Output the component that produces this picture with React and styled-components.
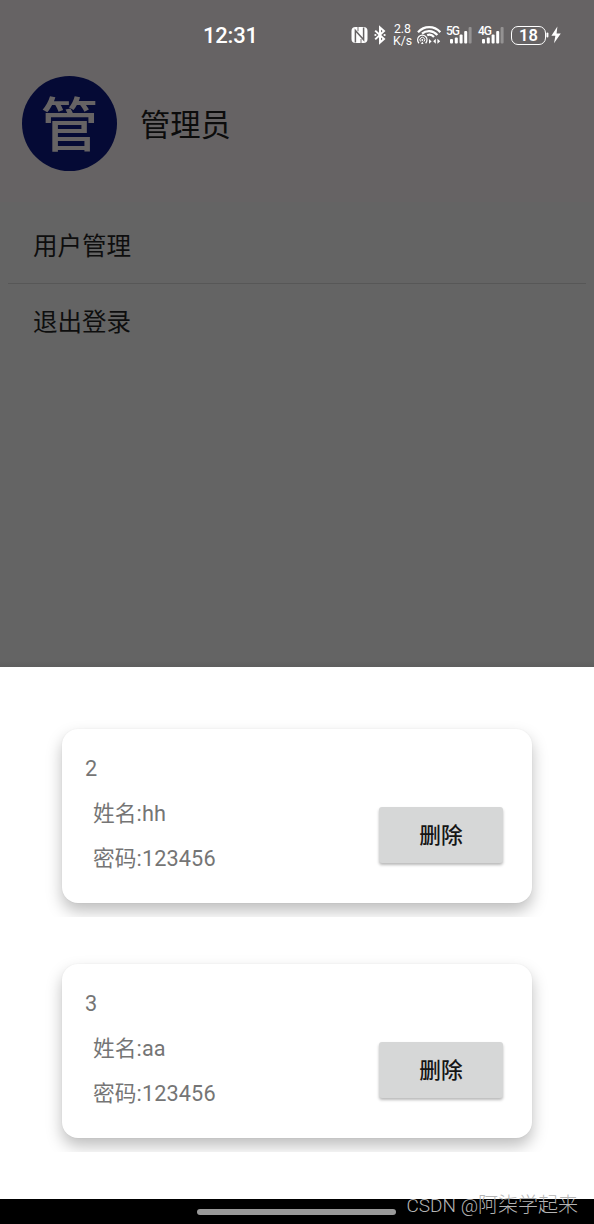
import styled, { createGlobalStyle } from "styled-components"

const usuarios = [
    { id: 2, nome: "hh", senha: "123456" },
    { id: 3, nome: "aa", senha: "123456" },
]

export default function App() {
    return (
        <>
            <GlobalStyle />
            <Tela>
                <Topo>
                    <StatusBar>
                        <Hora>12:31</Hora>
                        <StatusIcons />
                    </StatusBar>
                    <Perfil>
                        <Avatar>管</Avatar>
                        <Nome>管理员</Nome>
                    </Perfil>
                </Topo>
                <Menu>
                    <MenuItem>用户管理</MenuItem>
                    <MenuItem $linha>退出登录</MenuItem>
                </Menu>
                <Painel>
                    {usuarios.map(u => (
                        <Item key={u.id}>
                            <Card>
                                <Dados>
                                    <Numero>{u.id}</Numero>
                                    <Campo>姓名:{u.nome}</Campo>
                                    <Campo>密码:{u.senha}</Campo>
                                </Dados>
                                <Excluir>删除</Excluir>
                            </Card>
                        </Item>
                    ))}
                </Painel>
                <NavBar>
                    <Gesto />
                </NavBar>
                <Marca><MarcaSite>CSDN @</MarcaSite>阿柒学起来</Marca>
            </Tela>
        </>
    )
}

function Sinal({ tipo }) {
    return (
        <Rede>
            <RedeTipo>{tipo}</RedeTipo>
            <svg width="26" height="22" viewBox="0 0 26 22" fill="#fff">
                <rect x="4" y="15" width="3" height="4.5" rx="1" />
                <rect x="8.8" y="13.4" width="3" height="6.1" rx="1" />
                <rect x="13.6" y="10.5" width="3" height="9" rx="1" />
                <rect x="18.2" y="7" width="3" height="12.5" rx="1" />
                <rect x="22.6" y="3" width="3" height="16.5" rx="1" opacity="0.3" />
            </svg>
        </Rede>
    )
}

function StatusIcons() {
    return (
        <Icones>
            <svg width="17" height="18" viewBox="0 0 17 18">
                <rect x="0.5" y="1" width="16" height="16" rx="4" fill="#fff" />
                <path d="M4.4 16.5V4.4l8.2 9.4V1.5" fill="none" stroke="#666364" strokeWidth="1.5" />
                <path d="M7 5.2V1M10 13v4" fill="none" stroke="#666364" strokeWidth="0.9" />
            </svg>
            <Bluetooth width="12" height="20" viewBox="0 0 12 20">
                <path d="M1.2 5.6 10 14 6 17.6V2.4L10 6 1.2 14.4" fill="none" stroke="#fff" strokeWidth="2" />
                <circle cx="1.4" cy="10" r="1.1" fill="#fff" />
                <circle cx="10.6" cy="10" r="1.1" fill="#fff" />
            </Bluetooth>
            <Velocidade>
                <span>2.8</span>
                <span>K/s</span>
            </Velocidade>
            <Wifi width="24" height="20" viewBox="0 0 24 20" fill="none" stroke="#fff">
                <path d="M1 7.2C7.2 0.5 17.2 0.5 23.3 7.2" strokeWidth="2.2" />
                <path d="M5 8.7C9.2 5 15.6 5 20.4 10" strokeWidth="2.2" />
                <path d="M10.2 10.2C12.6 9.2 15 9.8 17 12" strokeWidth="2.2" />
                <path d="M2 18.2A4.7 4.7 0 1 1 8.6 18.2" strokeWidth="1.2" />
                <path d="M3.7 16.5A2.4 2.4 0 1 1 7 16.5" strokeWidth="1" />
                <circle cx="5.3" cy="15" r="0.9" fill="#fff" stroke="none" />
                <path d="M4 19 5.3 16.4 6.6 19Z" fill="#fff" stroke="none" />
                <path d="M12 14v4.8l2.6-2.2z" fill="#fff" stroke="none" />
                <path d="M18.8 13.8v5l-2.6-2.5zM20.4 13.8v5l2.8-2.5z" fill="#fff" stroke="none" />
            </Wifi>
            <Sinal tipo="5G" />
            <Sinal tipo="4G" />
            <Bateria>18</Bateria>
            <svg width="15" height="20" viewBox="0 0 15 20" fill="#fff">
                <rect x="0.4" y="7.5" width="2" height="5" rx="1" />
                <path d="M11.4 1.6 5.4 10.8h4l-1.4 7.4 6.8-9.6h-4.2z" />
            </svg>
        </Icones>
    )
}

const GlobalStyle = createGlobalStyle`
    * {
        box-sizing: border-box;
    }
    body {
        margin: 0;
        font-family: Roboto, 'Noto Sans CJK SC', sans-serif;
    }
`
const Tela = styled.div`
    position: relative;
    width: 594px;
    height: 1224px;
    display: flex;
    flex-direction: column;
    overflow: hidden;
    background: #646464;
`
const Topo = styled.header`
    height: 202px;
    background: #666364;
`
const StatusBar = styled.div`
    height: 70px;
    padding: 0 33px 0 203px;
    display: flex;
    justify-content: space-between;
    align-items: center;
    color: #FFFFFF;
`
const Hora = styled.span`
    padding-top: 2px;
    font-size: 22px;
    font-weight: 500;
    line-height: 26px;
    letter-spacing: -0.2px;
`
const Icones = styled.div`
    height: 22px;
    display: flex;
    align-items: center;
`
const Bluetooth = styled.svg`
    margin-left: 6px;
`
const Velocidade = styled.div`
    width: 19px;
    margin: 1px 5px 0 7px;
    display: flex;
    flex-direction: column;
    align-items: center;
    font-size: 12.3px;
    line-height: 11.5px;
`
const Wifi = styled.svg`
    margin-right: 5px;
`
const Rede = styled.div`
    position: relative;
    width: 26px;
    height: 22px;
    margin-right: 6px;
`
const RedeTipo = styled.span`
    position: absolute;
    top: 1px;
    left: 0;
    font-size: 12px;
    font-weight: 500;
    line-height: 12px;
    letter-spacing: -1px;
`
const Bateria = styled.div`
    width: 35px;
    height: 19px;
    margin-left: 1px;
    padding-top: 1px;
    border: 1.6px solid #FFFFFF;
    border-radius: 7px;
    display: flex;
    justify-content: center;
    align-items: center;
    font-size: 16.5px;
    font-weight: 600;
    line-height: 16px;
`
const Perfil = styled.div`
    padding: 6px 22px 0;
    display: flex;
    align-items: center;
    gap: 23px;
`
const Avatar = styled.div`
    width: 95px;
    height: 95px;
    border-radius: 50%;
    background: #050A35;
    color: #666364;
    font-size: 58px;
    font-weight: 500;
    line-height: 100px;
    text-align: center;
`
const Nome = styled.h1`
    margin: 0;
    padding-top: 4px;
    color: #0C0C0C;
    font-size: 30.3px;
    font-weight: 400;
    line-height: 40px;
`
const Menu = styled.nav`
    height: 465px;
    padding: 5px 8px 0;
    background: linear-gradient(to top, #5E5E5E, #646464 6px);
`
const MenuItem = styled.div`
    height: 76px;
    padding: 0 0 2px 25px;
    display: flex;
    align-items: center;
    border-top: 1px solid ${props => props.$linha ? "#575757" : "transparent"};
    color: #0E0E0E;
    font-size: 24.5px;
`
const Painel = styled.section`
    height: 532px;
    padding-top: 15px;
    background: #FFFFFF;
`
// o item corta a sombra do card na parte de baixo
const Item = styled.div`
    height: 235px;
    padding: 47px 62px 0;
    overflow: hidden;
`
const Card = styled.article`
    height: 174px;
    padding: 17px 29px 0 23px;
    display: flex;
    justify-content: space-between;
    background: #FFFFFF;
    border-radius: 16px;
    box-shadow: 0 8px 16px rgba(0, 0, 0, 0.26), 0 0 2px rgba(0, 0, 0, 0.05);
`
const Dados = styled.div`
    color: #757575;
    font-size: 21.7px;
    line-height: 45px;
    letter-spacing: 0.1px;
`
const Numero = styled.div`
    height: 45px;
`
const Campo = styled.div`
    height: 45px;
    padding-left: 8px;
`
const Excluir = styled.button`
    width: 124px;
    height: 56px;
    margin-top: 61px;
    padding: 0 0 4px;
    border: none;
    border-radius: 3px;
    background: #D6D7D7;
    box-shadow: 0 2px 3px rgba(0, 0, 0, 0.28);
    color: #151515;
    font-family: inherit;
    font-size: 21.7px;
    font-weight: 500;
`
const NavBar = styled.footer`
    height: 25px;
    padding-right: 1px;
    display: flex;
    justify-content: center;
    align-items: center;
    background: #000000;
`
const Gesto = styled.div`
    width: 199px;
    height: 6px;
    border-radius: 3px;
    background: #999999;
`
const Marca = styled.span`
    position: absolute;
    right: 16px;
    bottom: 4px;
    color: #B4B4B4;
    font-size: 20px;
    font-weight: 300;
    line-height: 28px;
    white-space: nowrap;
`
const MarcaSite = styled.span`
    font-size: 19px;
`
